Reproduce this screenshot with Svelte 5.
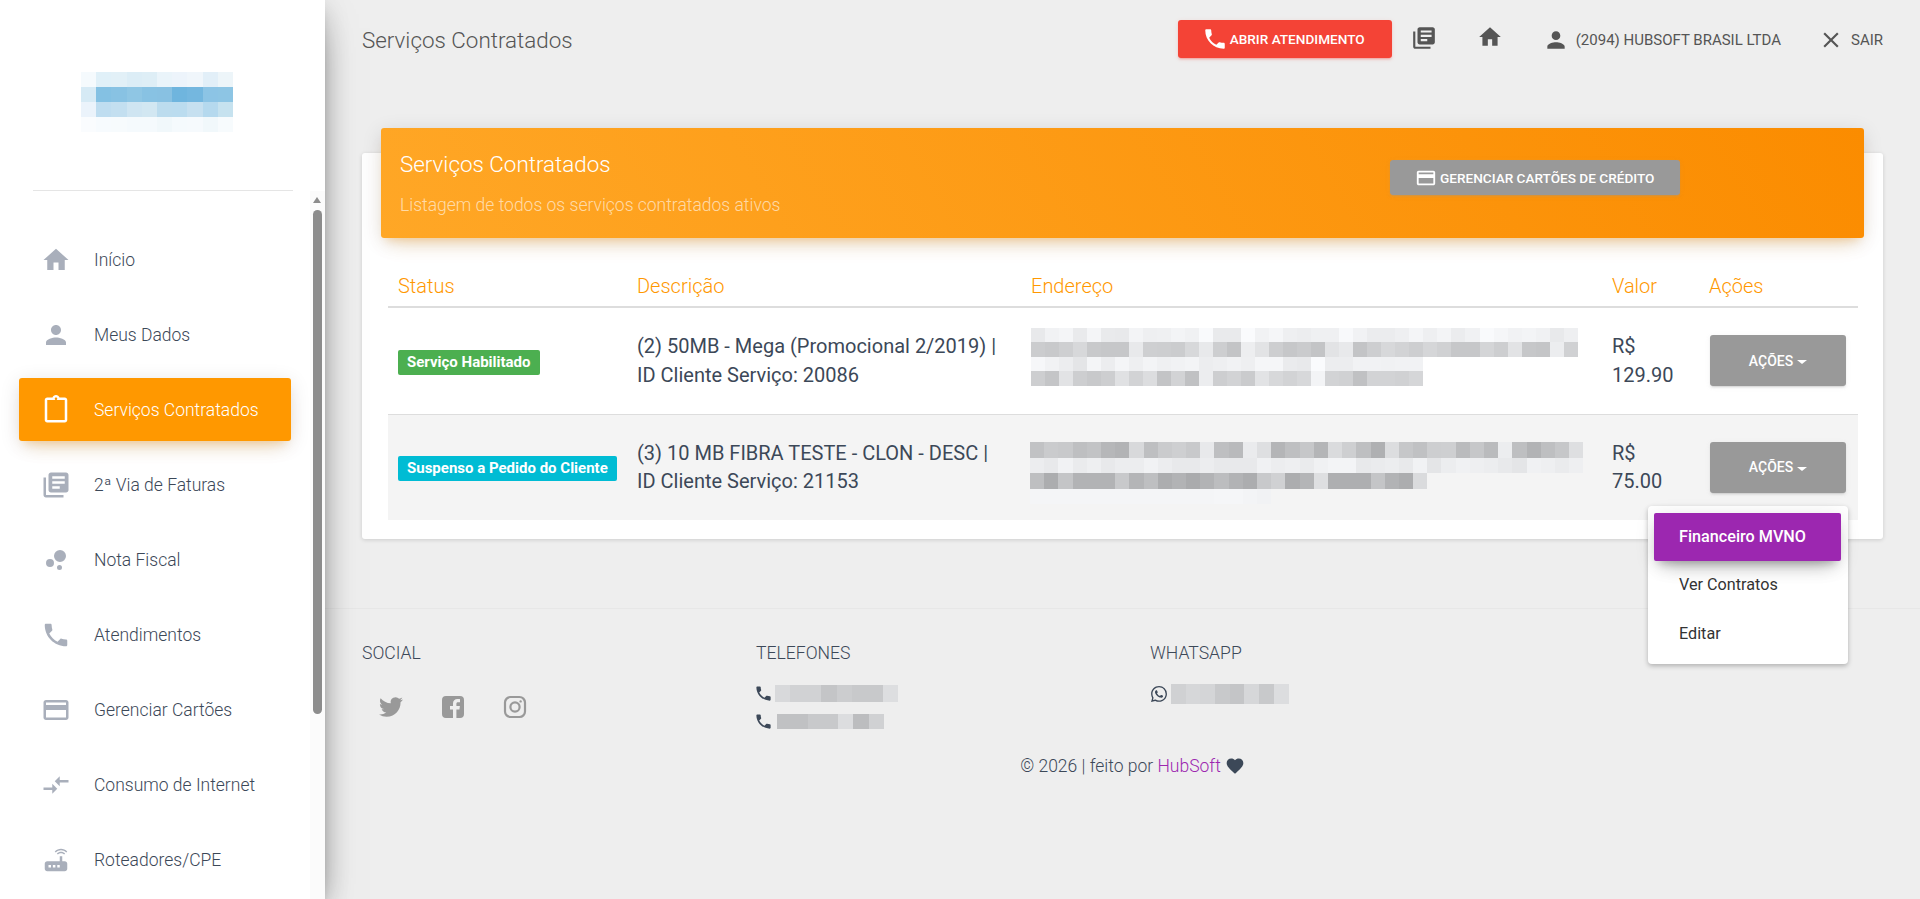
<script>
  const P = {
    home: 'M10 20v-6h4v6h5v-8h3L12 3 2 12h3v8z',
    person: 'M12 12c2.21 0 4-1.79 4-4s-1.79-4-4-4-4 1.79-4 4 1.79 4 4 4zm0 2c-2.67 0-8 1.34-8 4v2h16v-2c0-2.66-5.33-4-8-4z',
    paste: 'M19 2h-4.18C14.4.84 13.3 0 12 0S9.6.84 9.18 2H5c-1.1 0-2 .9-2 2v16c0 1.1.9 2 2 2h14c1.1 0 2-.9 2-2V4c0-1.1-.9-2-2-2zm-7 0c.55 0 1 .45 1 1s-.45 1-1 1-1-.45-1-1 .45-1 1-1zm7 18H5V4h14v16z',
    books: 'M4 6H2v14c0 1.1.9 2 2 2h14v-2H4V6zm16-4H8c-1.1 0-2 .9-2 2v12c0 1.1.9 2 2 2h12c1.1 0 2-.9 2-2V4c0-1.1-.9-2-2-2zm-1 9H9V9h10v2zm-4 4H9v-2h6v2zm4-8H9V5h10v2z',
    bubble: 'M7.2 11.2a3.2 3.2 0 1 0 0 6.4 3.2 3.2 0 0 0 0-6.4zM14.8 16a2 2 0 1 0 0 4 2 2 0 0 0 0-4zM15.2 4a4.8 4.8 0 1 0 0 9.6 4.8 4.8 0 0 0 0-9.6z',
    phone: 'M6.62 10.79c1.44 2.83 3.76 5.14 6.59 6.59l2.2-2.2c.27-.27.67-.36 1.02-.24 1.12.37 2.33.57 3.57.57.55 0 1 .45 1 1V20c0 .55-.45 1-1 1-9.39 0-17-7.61-17-17 0-.55.45-1 1-1h3.5c.55 0 1 .45 1 1 0 1.25.2 2.45.57 3.57.11.35.03.74-.25 1.02l-2.2 2.2z',
    card: 'M20 4H4c-1.11 0-1.99.89-1.99 2L2 18c0 1.11.89 2 2 2h16c1.11 0 2-.89 2-2V6c0-1.11-.89-2-2-2zm0 14H4v-6h16v6zm0-10H4V6h16v2z',
    compare: 'M9.01 14H2v2h7.01v3L13 15l-3.99-4v3zm5.98-1v-3H22V8h-7.01V5L11 9l3.99 4z',
    router: 'M20.2 5.9l.8-.8C19.6 3.7 17.8 3 16 3s-3.6.7-5 2.1l.8.8C13 4.8 14.5 4.2 16 4.2s3 .6 4.2 1.7zm-.9.8c-.9-.9-2.1-1.4-3.3-1.4s-2.4.5-3.3 1.4l.8.8c.7-.7 1.6-1 2.5-1 .9 0 1.8.3 2.5 1l.8-.8zM19 13h-2V9h-2v4H5c-1.1 0-2 .9-2 2v4c0 1.1.9 2 2 2h14c1.1 0 2-.9 2-2v-4c0-1.1-.9-2-2-2zM8 18H6v-2h2v2zm3.5 0h-2v-2h2v2zm3.5 0h-2v-2h2v2z',
    close: 'M19 6.41L17.59 5 12 10.59 6.41 5 5 6.41 10.59 12 5 17.59 6.41 19 12 13.41 17.59 19 19 17.59 13.41 12z',
    heart: 'M12 21.35l-1.45-1.32C5.4 15.36 2 12.28 2 8.5 2 5.42 4.42 3 7.5 3c1.74 0 3.41.81 4.5 2.09C13.09 3.81 14.76 3 16.5 3 19.58 3 22 5.42 22 8.5c0 3.78-3.4 6.86-8.55 11.54L12 21.35z',
    twitter: 'M23.953 4.57a10 10 0 01-2.825.775 4.958 4.958 0 002.163-2.723c-.951.555-2.005.959-3.127 1.184a4.92 4.92 0 00-8.384 4.482C7.69 8.095 4.067 6.13 1.64 3.162a4.822 4.822 0 00-.666 2.475c0 1.71.87 3.213 2.188 4.096a4.904 4.904 0 01-2.228-.616v.06a4.923 4.923 0 003.946 4.827 4.996 4.996 0 01-2.212.085 4.936 4.936 0 004.604 3.417 9.867 9.867 0 01-6.102 2.105c-.39 0-.779-.023-1.17-.067a13.995 13.995 0 007.557 2.209c9.053 0 13.998-7.496 13.998-13.985 0-.21 0-.42-.015-.63A9.935 9.935 0 0024 4.59z',
    fb: 'M5 1h14a4 4 0 014 4v14a4 4 0 01-4 4h-3.6v-8.6h3l.5-3.4h-3.5V8.9c0-1 .3-1.7 1.7-1.7H19V4.2c-.3 0-1.4-.1-2.6-.1-2.6 0-4.4 1.6-4.4 4.5V11H9v3.4h3V23H5a4 4 0 01-4-4V5a4 4 0 014-4z',
    whatsapp: 'M17.472 14.382c-.297-.149-1.758-.867-2.03-.967-.273-.099-.471-.148-.67.15-.197.297-.767.966-.94 1.164-.173.199-.347.223-.644.075-.297-.15-1.255-.463-2.39-1.475-.883-.788-1.48-1.761-1.653-2.059-.173-.297-.018-.458.13-.606.134-.133.298-.347.446-.52.149-.174.198-.298.298-.497.099-.198.05-.371-.025-.52-.075-.149-.669-1.612-.916-2.207-.242-.579-.487-.5-.669-.51-.173-.008-.371-.01-.57-.01-.198 0-.52.074-.792.372-.272.297-1.04 1.016-1.04 2.479 0 1.462 1.065 2.875 1.213 3.074.149.198 2.096 3.2 5.077 4.487.709.306 1.262.489 1.694.625.712.227 1.36.195 1.871.118.571-.085 1.758-.719 2.006-1.413.248-.694.248-1.289.173-1.413-.074-.124-.272-.198-.57-.347m-5.421 7.403h-.004a9.87 9.87 0 01-5.031-1.378l-.361-.214-3.741.982.998-3.648-.235-.374a9.86 9.86 0 01-1.51-5.26c.001-5.45 4.436-9.884 9.888-9.884 2.64 0 5.122 1.03 6.988 2.898a9.825 9.825 0 012.893 6.994c-.003 5.45-4.437 9.884-9.885 9.884m8.413-18.297A11.815 11.815 0 0012.05 0C5.495 0 .16 5.335.157 11.892c0 2.096.547 4.142 1.588 5.945L.057 24l6.305-1.654a11.882 11.882 0 005.683 1.448h.005c6.554 0 11.89-5.335 11.893-11.893a11.821 11.821 0 00-3.48-8.413z'
  };

  const nav = [
    { label: 'Início', icon: P.home },
    { label: 'Meus Dados', icon: P.person },
    { label: 'Serviços Contratados', icon: P.paste, active: true },
    { label: '2ª Via de Faturas', icon: P.books },
    { label: 'Nota Fiscal', icon: P.bubble },
    { label: 'Atendimentos', icon: P.phone },
    { label: 'Gerenciar Cartões', icon: P.card },
    { label: 'Consumo de Internet', icon: P.compare },
    { label: 'Roteadores/CPE', icon: P.router }
  ];

  const logoRows = [
    ['#f5fafd','#e0f0f8','#e2f0f7','#dcedf6','#deeef6','#eaf4fa','#edf4fb','#f0f6fb','#e2eff8','#edf5f9'],
    ['#d6eaf5','#84c1e3','#88c2e3','#8fc6e4','#88c2e3','#88c1e2','#6fb5de','#74b7df','#8cc4e5','#8dc5e4'],
    ['#ebf3fb','#bfddf0','#c3dff0','#cfe5f2','#d2e7f2','#bcdcee','#bbdcef','#c6e0f0','#b5d9ee','#c6e2ef'],
    ['#fafcfe','#f7fbfe','#f7fbfd','#f5fafd','#f5fafd','#f1f8fb','#f5fafd','#f6fafd','#f1f8fb','#f7fbfd']
  ];

  const addr1 = [
    [232,241,244,233,244,233,232,243,238,239,243,240,249,233,233,250,241,245,238,236,239,239,248,241,235,235,238,244,238,243,235,240,249,245,241,243,240,232,238],
    [203,200,206,215,200,198,198,232,206,205,203,215,232,205,195,237,226,205,198,202,195,226,232,195,205,215,210,205,213,208,198,198,212,205,226,198,196,236,208],
    [246,241,236,228,244,236,244,238,243,239,241,243,236,238,241,238,245,245,234,232,250,236,236,241,241,240,241,241],
    [205,196,226,205,200,205,224,210,220,195,210,192,236,205,210,202,226,215,210,215,243,210,208,192,210,210,208,213]
  ];
  const addr2 = [
    [193,202,200,190,194,182,178,216,190,202,206,200,232,190,185,234,222,180,190,198,180,218,206,190,175,220,198,192,205,206,186,198,186,236,190,178,190,198,222],
    [236,232,241,234,238,232,236,236,241,236,232,232,236,232,232,232,240,236,238,234,240,243,243,232,234,236,232,241,228,236,240,238,236,232,228,240,238,234,238],
    [190,172,196,178,178,178,200,180,190,172,178,170,178,188,178,172,200,208,172,180,222,174,174,174,196,178,172,218],
    [244,244,244,244,244,244,244,244,244,244,244,244,244,245,245,243,241]
  ];
  const tel1 = [[216,209,209,196,204,200,200,221]];
  const tel2 = [[192,192,200,200,220,188,208]];
  const wa = [[208,214,212,200,196,214,200,220]];

  const grey = (l) => `rgb(${l},${l + 1},${l + 3})`;

  const services = [
    { badge: 'Serviço Habilitado', tone: 'green', l1: '(2) 50MB - Mega (Promocional 2/2019) |', l2: 'ID Cliente Serviço: 20086', addr: addr1, mos: 'a1', price: '129.90' },
    { badge: 'Suspenso a Pedido do Cliente', tone: 'cyan', l1: '(3) 10 MB FIBRA TESTE - CLON - DESC |', l2: 'ID Cliente Serviço: 21153', addr: addr2, mos: 'a2', price: '75.00', open: true }
  ];
</script>

{#snippet ic(d, cls)}
  <svg class={cls} viewBox="0 0 24 24" aria-hidden="true"><path {d} /></svg>
{/snippet}

{#snippet mosaic(rows, cls)}
  <div class="mosaic {cls}">
    {#each rows as row}
      <div class="mrow">
        {#each row as l}<i style="background:{grey(l)}"></i>{/each}
      </div>
    {/each}
  </div>
{/snippet}

<div class="app">
  <aside class="sidebar">
    <div class="logo-area">
      <div class="logo">
        {#each logoRows as row}
          <div class="logo-row">
            {#each row as c}<i style="background:{c}"></i>{/each}
          </div>
        {/each}
      </div>
    </div>
    <div class="divider"></div>
    <div class="nav-wrap">
      <nav class="nav">
        {#each nav as item}
          <a class="nav-item" class:active={item.active} href="#top">
            {@render ic(item.icon, 'nav-icon')}
            <span>{item.label}</span>
          </a>
        {/each}
      </nav>
      <div class="scrollbar">
        <div class="sb-up"></div>
        <div class="sb-thumb"></div>
      </div>
    </div>
  </aside>

  <main class="main">
    <header class="topbar">
      <div class="page-title">Serviços Contratados</div>
      <div class="actions">
        <button class="btn-red">{@render ic(P.phone, 'i-red')}<span>ABRIR ATENDIMENTO</span></button>
        {@render ic(P.books, 'i-book')}
        {@render ic(P.home, 'i-home')}
        {@render ic(P.person, 'i-person')}
        <span class="top-text">(2094) HUBSOFT BRASIL LTDA</span>
        {@render ic(P.close, 'i-close')}
        <span class="top-text sair">SAIR</span>
      </div>
    </header>

    <section class="card">
      <div class="card-head">
        <div class="head-text">
          <h4>Serviços Contratados</h4>
          <p>Listagem de todos os serviços contratados ativos</p>
        </div>
        <button class="btn-grey">{@render ic(P.card, 'i-card')}<span>GERENCIAR CARTÕES DE CRÉDITO</span></button>
      </div>
      <div class="card-body">
        <table>
          <colgroup>
            <col class="c1" /><col class="c2" /><col class="c3" /><col class="c4" /><col class="c5" />
          </colgroup>
          <thead>
            <tr><th>Status</th><th>Descrição</th><th>Endereço</th><th>Valor</th><th>Ações</th></tr>
          </thead>
          <tbody>
            {#each services as s}
              <tr class:odd={s.open}>
                <td><span class="badge {s.tone}">{s.badge}</span></td>
                <td>{s.l1}<br />{s.l2}</td>
                <td>{@render mosaic(s.addr, s.mos)}</td>
                <td>R$<br />{s.price}</td>
                <td>
                  <div class="dd">
                    <button class="btn-act">AÇÕES<b class="caret"></b></button>
                    {#if s.open}
                      <ul class="menu">
                        <li class="on">Financeiro MVNO</li>
                        <li>Ver Contratos</li>
                        <li>Editar</li>
                      </ul>
                    {/if}
                  </div>
                </td>
              </tr>
            {/each}
          </tbody>
        </table>
      </div>
    </section>

    <footer class="footer">
      <div class="foot-grid">
        <div>
          <h5>SOCIAL</h5>
          <div class="socials">
            {@render ic(P.twitter, 's-tw')}
            {@render ic(P.fb, 's-fb')}
            <svg class="s-ig" viewBox="0 0 24 24" aria-hidden="true">
              <rect x="2" y="2" width="20" height="20" rx="5.5" />
              <circle cx="12" cy="12" r="4.6" />
              <circle class="dot" cx="17.6" cy="6.4" r="1.2" />
            </svg>
          </div>
        </div>
        <div>
          <h5>TELEFONES</h5>
          <div class="tel t1">{@render ic(P.phone, 'i-tel')}{@render mosaic(tel1, 'm-tel1')}</div>
          <div class="tel t2">{@render ic(P.phone, 'i-tel')}{@render mosaic(tel2, 'm-tel2')}</div>
        </div>
        <div>
          <h5>WHATSAPP</h5>
          <div class="tel t1">{@render ic(P.whatsapp, 'i-wa')}{@render mosaic(wa, 'm-wa')}</div>
        </div>
      </div>
      <div class="copy"><span>© 2026 | feito por <a href="#top">HubSoft</a></span>{@render ic(P.heart, 'i-heart')}</div>
    </footer>
  </main>
</div>

<style>
  :global(body) {
    margin: 0;
    background: #eeeeee;
    font-family: Roboto, "Liberation Sans", sans-serif;
    overflow: hidden;
  }
  .app { display: flex; height: 899px; overflow: hidden; }

  /* Sidebar */
  .sidebar {
    width: 325px;
    flex: none;
    background: #fff;
    display: flex;
    flex-direction: column;
    position: relative;
    z-index: 5;
    box-shadow: 0 16px 38px -12px rgba(0,0,0,.56), 0 4px 25px 0 rgba(0,0,0,.12), 0 8px 10px -5px rgba(0,0,0,.2);
  }
  .logo-area { height: 190px; padding-top: 72px; box-sizing: border-box; padding-left: 81px; }
  .logo-row { display: flex; }
  .logo-row i { width: 15.2px; height: 15px; display: block; }
  .divider { height: 1px; background: #e5e5e5; margin: 0 32px 0 33px; flex: none; }
  .nav-wrap { flex: 1; display: flex; min-height: 0; }
  .nav { flex: 1; padding-top: 37px; padding-left: 19px; overflow: hidden; }
  .nav-item {
    display: flex;
    align-items: center;
    width: 272px;
    height: 63px;
    margin-bottom: 12px;
    padding-left: 22px;
    box-sizing: border-box;
    border-radius: 3px;
    color: #3c4858;
    font-size: 17.5px;
    font-weight: 300;
    text-decoration: none;
  }
  .nav-item span { margin-left: 23px; }
  :global(.nav-icon) { width: 30px; height: 30px; fill: #a9afbb; flex: none; }
  .nav-item.active {
    background: #ff9800;
    color: #fff;
    box-shadow: 0 12px 20px -10px rgba(255,152,0,.28), 0 4px 20px 0 rgba(0,0,0,.12), 0 7px 8px -5px rgba(255,152,0,.2);
  }
  .nav-item.active :global(.nav-icon) { fill: #fff; }
  .scrollbar { width: 15px; flex: none; background: #fbfbfb; position: relative; padding: 0 3px; box-sizing: border-box; }
  .sb-up {
    width: 0; height: 0; margin: 6px 0 3px;
    border-left: 4.5px solid transparent;
    border-right: 4.5px solid transparent;
    border-bottom: 6px solid #8c8c8c;
  }
  .sb-thumb { width: 9px; height: 504px; margin-top: 7px; border-radius: 4.5px; background: #8c8c8c; }

  /* Main */
  .main { flex: 1; min-width: 0; padding-top: 20px; }
  .topbar { display: flex; align-items: center; height: 38px; padding: 0 37px; }
  .page-title { font-size: 22.4px; font-weight: 300; color: #555; padding-top: 2px; }
  .actions { margin-left: auto; display: flex; align-items: center; }
  button { font-family: inherit; border: 0; cursor: pointer; }
  .btn-red {
    width: 214px; height: 38px;
    display: flex; align-items: center; padding: 0 0 0 24px;
    background: #f44336; color: #fff; border-radius: 3px;
    font-size: 13.6px; font-weight: 500;
    box-shadow: 0 2px 2px 0 rgba(244,67,54,.14), 0 3px 1px -2px rgba(244,67,54,.2), 0 1px 5px 0 rgba(244,67,54,.12);
  }
  :global(.i-red) { width: 26px; height: 26px; fill: #fff; margin-right: 2px; flex: none; }
  :global(.i-book) { width: 26px; height: 26px; fill: #555; margin-left: 19px; margin-top: -3px; }
  :global(.i-home) { width: 26px; height: 26px; fill: #555; margin-left: 40px; margin-top: -5px; }
  :global(.i-person) { width: 26px; height: 26px; fill: #555; margin-left: 40px; margin-top: 1px; }
  .top-text { font-size: 15px; color: #555; margin-left: 7px; margin-top: 1px; }
  :global(.i-close) { width: 26px; height: 26px; fill: #555; margin-left: 37px; margin-top: 1px; }
  .sair { margin-left: 7px; }

  /* Card */
  .card {
    margin: 95px 37px 0;
    height: 386px;
    background: #fff;
    border-radius: 3px;
    box-shadow: 0 1px 4px 0 rgba(0,0,0,.14);
    box-sizing: border-box;
  }
  .card-head {
    display: flex;
    margin: 0 19px;
    position: relative;
    top: -25px;
    height: 110px;
    box-sizing: border-box;
    padding: 22px 19px 0;
    color: #fff;
    border-radius: 3px;
    background: linear-gradient(60deg, #ffa726, #fb8c00);
    box-shadow: 0 12px 20px -10px rgba(255,152,0,.28), 0 4px 20px 0 rgba(0,0,0,.12), 0 7px 8px -5px rgba(255,152,0,.2);
  }
  .head-text { width: 990px; flex: none; }
  h4 { margin: 0; font-size: 22.4px; font-weight: 300; line-height: 28px; }
  p { margin: 15px 0 0; font-size: 17.5px; font-weight: 300; line-height: 24px; color: rgba(255,255,255,.62); }
  .btn-grey {
    width: 290px; height: 35px; margin-top: 10px;
    display: flex; align-items: center; padding: 0 0 0 25px;
    background: #999; color: #fff; border-radius: 3px;
    font-size: 13.6px; font-weight: 500;
    box-shadow: 0 2px 2px 0 rgba(153,153,153,.14), 0 3px 1px -2px rgba(153,153,153,.2), 0 1px 5px 0 rgba(153,153,153,.12);
  }
  :global(.i-card) { width: 22px; height: 22px; fill: #fff; margin-right: 3px; flex: none; }
  .card-body { padding: 0 25px 0 26px; }
  table { width: 1470px; table-layout: fixed; border-collapse: collapse; }
  .c1 { width: 239px; } .c2 { width: 394px; } .c3 { width: 581px; } .c4 { width: 97px; } .c5 { width: 159px; }
  th {
    text-align: left; font-size: 20px; font-weight: 300; color: #ff9800;
    padding: 0 10px 8px; height: 44px; border-bottom: 2px solid #ddd;
    box-sizing: border-box; vertical-align: bottom;
  }
  td {
    height: 107px; padding: 0 10px; box-sizing: border-box;
    border-bottom: 1px solid #ddd;
    font-size: 20px; font-weight: 400; line-height: 28.5px; color: #3c4858;
    vertical-align: middle;
  }
  tbody tr:last-child td { border-bottom: 0; height: 106px; }
  tr.odd { background: #f4f4f4; }
  .badge {
    display: inline-block; vertical-align: middle;
    padding: 0 9px; height: 25px; line-height: 25px;
    font-size: 15px; font-weight: 700; color: #fff; border-radius: 2px;
  }
  .badge.green { background: #4caf50; }
  .badge.cyan { background: #00bcd4; }

  .mosaic { display: block; }
  .mrow { display: flex; }
  .mrow i { display: block; flex: none; }
  .a1 { margin-bottom: 8px; }
  .a1 .mrow i { width: 14.03px; height: 14.5px; }
  .a2 { margin-top: 12px; margin-left: -1px; }
  .a2 .mrow i { width: 14.2px; height: 15.5px; }

  .dd { position: relative; width: 136px; margin-left: 1px; }
  .btn-act {
    width: 136px; height: 51px; background: #999; color: #fff; border-radius: 3px;
    font-size: 14px; font-weight: 500; display: block;
    box-shadow: 0 2px 2px 0 rgba(153,153,153,.14), 0 3px 1px -2px rgba(153,153,153,.2), 0 1px 5px 0 rgba(153,153,153,.12);
  }
  .caret {
    display: inline-block; width: 0; height: 0; margin-left: 4px; vertical-align: middle;
    border-left: 5px solid transparent; border-right: 5px solid transparent; border-top: 4px solid #fff;
  }
  .menu {
    position: absolute; top: 64px; right: -2px; width: 200px; height: 158px;
    box-sizing: border-box; margin: 0; padding: 7px 7px 0 6px; list-style: none;
    background: #fff; border-radius: 4px; z-index: 10;
    box-shadow: 0 2px 5px 0 rgba(0,0,0,.26);
  }
  .menu li {
    height: 48px; margin-bottom: 0.5px; padding-left: 25px;
    display: flex; align-items: center;
    font-size: 16.2px; line-height: 20px; color: #333; border-radius: 2px;
  }
  .menu li.on {
    background: #9c27b0; color: #fff; font-weight: 500;
    box-shadow: 0 12px 20px -10px rgba(0,0,0,.28), 0 4px 20px 0 rgba(0,0,0,.12), 0 7px 8px -5px rgba(0,0,0,.2);
  }

  /* Footer */
  .footer { margin-top: 69px; border-top: 1px solid #e7e7e7; padding: 34px 37px 0; color: #3c4858; }
  .foot-grid { display: grid; grid-template-columns: 394px 394px 1fr; height: 113px; }
  h5 { margin: 0; font-size: 17.6px; font-weight: 300; line-height: 20px; }
  .socials { display: flex; align-items: center; margin-top: 32px; padding-left: 17px; }
  :global(.s-tw) { width: 24px; height: 24px; fill: #999; }
  :global(.s-fb) { width: 24px; height: 24px; fill: #999; margin-left: 38px; }
  :global(.s-ig) { width: 24px; height: 24px; fill: none; stroke: #999; stroke-width: 2.2; margin-left: 38px; }
  :global(.s-ig .dot) { fill: #999; stroke: none; }
  .tel { display: flex; align-items: center; }
  .t1 { margin-top: 21px; }
  .t2 { margin-top: 9px; }
  :global(.i-tel) { width: 19px; height: 19px; fill: #3c4858; margin-left: -2px; flex: none; }
  :global(.i-wa) { width: 16px; height: 16px; fill: #3c4858; margin-left: 1px; flex: none; }
  .mosaic.m-tel1 { margin-left: 2px; }
  .m-tel1 .mrow i { width: 15.4px; height: 17px; }
  .mosaic.m-tel2 { margin-left: 4px; }
  .m-tel2 .mrow i { width: 15.3px; height: 15px; }
  .mosaic.m-wa { margin-left: 4px; }
  .m-wa .mrow i { width: 14.7px; height: 20px; }
  .copy { padding-left: 20px; font-size: 17.5px; font-weight: 300; color: #3c4858; display: flex; align-items: center; justify-content: center; gap: 4px; }
  .copy a { color: #9c27b0; text-decoration: none; }
  :global(.i-heart) { width: 20px; height: 20px; fill: #3c4858; }
</style>
